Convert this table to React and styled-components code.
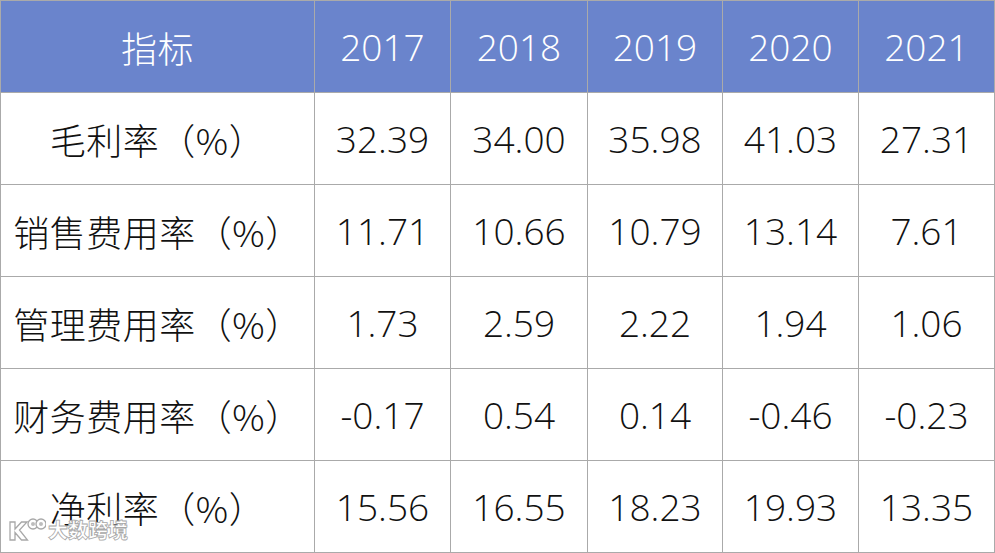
import styled, { createGlobalStyle } from 'styled-components';

const GlobalStyle = createGlobalStyle`
  html, body {
    margin: 0;
    padding: 0;
    background: #fff;
  }
`;

const Wrapper = styled.div`
  position: relative;
  width: 995px;
  height: 553px;
  overflow: hidden;
`;

const Grid = styled.div`
  display: grid;
  grid-template-columns: 313px 135px 136px 134px 135px 135px;
  grid-auto-rows: 91px;
  gap: 1px;
  padding: 1px;
  background: #aaaaaa;
  width: 995px;
  box-sizing: border-box;
`;

const Cell = styled.div`
  display: flex;
  align-items: center;
  justify-content: center;
  background: ${(p) => (p.$head ? '#6a84cc' : '#ffffff')};
  color: ${(p) => (p.$head ? '#ffffff' : '#111111')};
  font-family: 'Open Sans', 'Noto Sans CJK SC', sans-serif;
  font-size: 37px;
  font-weight: 300;
  white-space: nowrap;
  box-sizing: border-box;
`;

const Label = styled.span`
  font-family: 'Noto Sans CJK SC', sans-serif;
  font-size: 36px;
  font-weight: 300;
  letter-spacing: 0.5px;
`;

const Watermark = styled.div`
  position: absolute;
  left: 8px;
  top: 517px;
  display: flex;
  align-items: center;
  gap: 2px;
`;

const MarkText = styled.span`
  font-family: 'Noto Sans CJK SC', sans-serif;
  font-weight: 900;
  font-size: 20px;
  line-height: 26px;
  color: #ffffff;
  -webkit-text-stroke: 0.8px #a8a8a8;
`;

const header = ['指标', '2017', '2018', '2019', '2020', '2021'];

const rows = [
  ['毛利率（%）', '32.39', '34.00', '35.98', '41.03', '27.31'],
  ['销售费用率（%）', '11.71', '10.66', '10.79', '13.14', '7.61'],
  ['管理费用率（%）', '1.73', '2.59', '2.22', '1.94', '1.06'],
  ['财务费用率（%）', '-0.17', '0.54', '0.14', '-0.46', '-0.23'],
  ['净利率（%）', '15.56', '16.55', '18.23', '19.93', '13.35'],
];

function Logo() {
  return (
    <svg width="38" height="26" viewBox="0 0 38 26">
      <g fill="#fff" stroke="#a8a8a8" strokeWidth="1.3">
        <path d="M2 5 h5 v7 l6.5 -7 h5.5 l-7.5 8 l8 10 h-6 l-6.5 -7.5 v7.5 h-5 z" />
        <circle cx="25" cy="7" r="5" />
        <circle cx="33" cy="7" r="5" />
      </g>
      <circle cx="25" cy="7" r="2" fill="#bdbdbd" />
      <circle cx="33" cy="7" r="2" fill="#bdbdbd" />
    </svg>
  );
}

export default function App() {
  return (
    <>
      <GlobalStyle />
      <Wrapper>
        <Grid>
          {header.map((h, i) => (
            <Cell key={h} $head>
              {i === 0 ? <Label>{h}</Label> : h}
            </Cell>
          ))}
          {rows.map((r) =>
            r.map((v, i) => (
              <Cell key={r[0] + i}>{i === 0 ? <Label>{v}</Label> : v}</Cell>
            ))
          )}
        </Grid>
        <Watermark>
          <Logo />
          <MarkText>大数跨境</MarkText>
        </Watermark>
      </Wrapper>
    </>
  );
}
